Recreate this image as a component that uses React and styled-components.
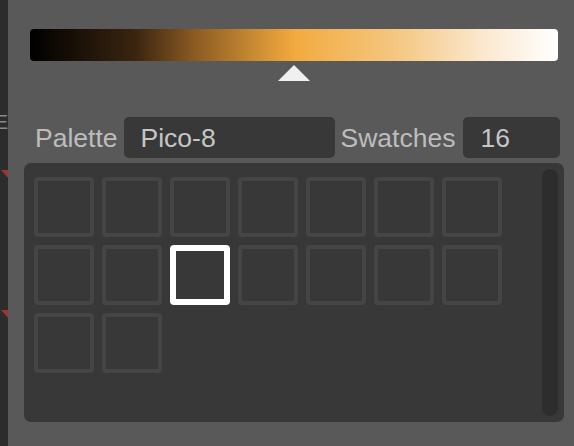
import React, { useState } from "react";
import styled, { createGlobalStyle } from "styled-components";

const GlobalStyle = createGlobalStyle`
  html, body {
    margin: 0;
    padding: 0;
    background: #595959;
  }
  body {
    font-family: "Liberation Sans", Arial, sans-serif;
    overflow: hidden;
  }
`;

const palettes = {
  "Pico-8": 16,
};

const App = () => {
  const [palette] = useState("Pico-8");
  const [selected, setSelected] = useState(9);
  const [stop] = useState(50);

  const count = palettes[palette];

  return (
    <Wrapper>
      <GlobalStyle />
      <SideStrip>
        <span className="letter">E</span>
        <Marker $top={70} />
        <Marker $top={210} />
      </SideStrip>

      <Panel>
        <Slider>
          <GradientBar />
          <Handle style={{ left: `${stop}%` }} />
        </Slider>

        <Row>
          <Label>Palette</Label>
          <Field $width={211}>{palette}</Field>
          <Label>Swatches</Label>
          <Field $width={97} $push>
            {count}
          </Field>
        </Row>

        <SwatchBox>
          <Grid>
            {Array.from({ length: count }).map((_, i) => (
              <Swatch
                key={i}
                $active={i === selected}
                onClick={() => setSelected(i)}
              />
            ))}
          </Grid>
          <Scrollbar />
        </SwatchBox>
      </Panel>
    </Wrapper>
  );
};

const Wrapper = styled.div`
  display: flex;
  width: 574px;
  height: 446px;
  background: #595959;
`;

const SideStrip = styled.div`
  position: relative;
  width: 8px;
  flex-shrink: 0;
  background: #2c2c2c;
  overflow: hidden;

  .letter {
    position: absolute;
    top: 112px;
    right: 0;
    font-size: 20px;
    line-height: 20px;
    color: #8a8a8a;
  }
`;

const Marker = styled.div`
  position: absolute;
  top: ${(p) => p.$top + 100}px;
  left: 1px;
  width: 0;
  height: 0;
  border-left: 7px solid transparent;
  border-top: 8px solid #9c3535;
`;

const Panel = styled.div`
  flex: 1;
  display: flex;
  flex-direction: column;
`;

const Slider = styled.div`
  position: relative;
  margin: 29px 16px 0 22px;
  height: 52px;
`;

const GradientBar = styled.div`
  height: 32px;
  border-radius: 4px;
  background: linear-gradient(
    to right,
    #000000 0%,
    #3a2510 20%,
    #8a5a22 31%,
    #f2aa3e 50%,
    #f5c884 70%,
    #fbe8cf 86%,
    #ffffff 100%
  );
`;

const Handle = styled.div`
  position: absolute;
  top: 36px;
  width: 0;
  height: 0;
  transform: translateX(-50%);
  border-left: 16px solid transparent;
  border-right: 16px solid transparent;
  border-bottom: 16px solid #f0f0f0;
`;

const Row = styled.div`
  display: flex;
  align-items: center;
  gap: 6px;
  margin: 36px 0 0 27px;
  height: 41px;
`;

const Label = styled.span`
  font-size: 26.5px;
  line-height: 41px;
  padding-top: 2px;
  color: #bdbdbd;
`;

const Field = styled.div`
  width: ${(p) => p.$width}px;
  height: 41px;
  margin-left: ${(p) => (p.$push ? "2px" : "0")};
  box-sizing: border-box;
  padding: 2px 0 0 17px;
  display: flex;
  align-items: center;
  border-radius: 5px;
  background: #383838;
  color: #c6c6c6;
  font-size: 26.5px;
`;

const SwatchBox = styled.div`
  display: flex;
  justify-content: space-between;
  margin: 5px 10px 0 16px;
  height: 259px;
  box-sizing: border-box;
  padding: 14px 6px 6px 10px;
  border-radius: 7px;
  background: #383838;
`;

const Grid = styled.div`
  display: grid;
  grid-template-columns: repeat(7, 60px);
  grid-auto-rows: 60px;
  gap: 8px;
  align-content: start;
`;

const Swatch = styled.div`
  box-sizing: border-box;
  border-radius: 4px;
  border: ${(p) => (p.$active ? "6px solid #ffffff" : "4px solid #454545")};
  background: #383838;
  cursor: pointer;
`;

const Scrollbar = styled.div`
  width: 16px;
  margin-top: -8px;
  border-radius: 8px;
  background: #2d2d2d;
`;

export default App;
